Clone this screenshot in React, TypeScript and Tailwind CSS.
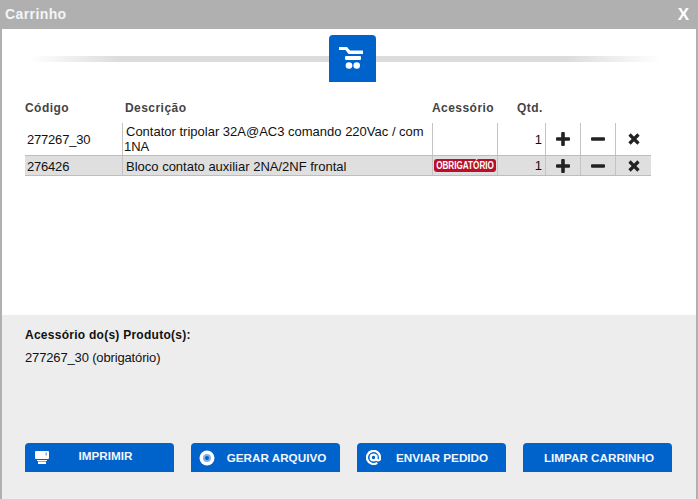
import React from 'react';

interface CartItem {
  code: string;
  description: string;
  required: boolean;
  qty: number;
}

const items: CartItem[] = [
  { code: '277267_30', description: 'Contator tripolar 32A@AC3 comando 220Vac / com 1NA', required: false, qty: 1 },
  { code: '276426', description: 'Bloco contato auxiliar 2NA/2NF frontal', required: true, qty: 1 },
];

const CartIcon = () => (
  <svg className="mr-[3px]" width="24" height="23" viewBox="0 0 24 23" fill="white">
    <path d="M0 0h8l3 3.5h13V7H9.5L6.5 3H0z" />
    <rect x="6" y="9" width="16" height="4" rx="1" />
    <circle cx="10" cy="18.5" r="3.3" />
    <circle cx="17.7" cy="18.5" r="3.3" />
  </svg>
);

const PlusIcon = () => (
  <svg width="16" height="16" viewBox="0 0 16 16" fill="#222">
    <rect x="6.2" y="1" width="3.6" height="14" rx="1" />
    <rect x="1" y="6.2" width="14" height="3.6" rx="1" />
  </svg>
);

const MinusIcon = () => (
  <svg width="16" height="16" viewBox="0 0 16 16" fill="#222">
    <rect x="1" y="6.2" width="14" height="3.6" rx="1" />
  </svg>
);

const CrossIcon = () => (
  <svg width="12" height="12" viewBox="0 0 12 12" stroke="#222" strokeWidth="3.2">
    <path d="M1.5 1.5l9 9M10.5 1.5l-9 9" />
  </svg>
);

const PrintIcon = () => (
  <svg width="15" height="13" viewBox="0 0 15 13" fill="white">
    <rect x="0" y="0" width="14" height="8" rx="1" />
    <rect x="10.5" y="1.5" width="1.5" height="3" fill="#7fb0e6" />
    <rect x="2" y="9" width="10" height="1" />
    <rect x="3" y="10.5" width="8" height="2.5" />
  </svg>
);

const DiscIcon = () => (
  <svg width="16" height="16" viewBox="0 0 16 16">
    <circle cx="8" cy="8" r="7.5" fill="white" />
    <circle cx="8" cy="8" r="4" fill="#7fb0e6" />
    <circle cx="8" cy="8" r="2" fill="#0063cc" />
  </svg>
);

const AtIcon = () => (
  <svg width="15" height="15" viewBox="0 0 16 16" fill="none" stroke="white" strokeWidth="2.4">
    <circle cx="8" cy="8" r="3" />
    <path d="M11 5v4a2 2 0 0 0 4 0V8a7 7 0 1 0-3 5.7" />
  </svg>
);

const buttons = [
  { label: 'IMPRIMIR', icon: <PrintIcon />, iconLeft: 'pl-[9px]', textClass: 'w-[111px] -mt-[3px]' },
  { label: 'GERAR ARQUIVO', icon: <DiscIcon />, iconLeft: 'pl-2', textClass: 'w-[123px]' },
  { label: 'ENVIAR PEDIDO', icon: <AtIcon />, iconLeft: 'pl-2', textClass: 'w-[122px]' },
  { label: 'LIMPAR CARRINHO', icon: null, iconLeft: 'pl-[3px]', textClass: 'w-full' },
];

const App: React.FC = () => {
  return (
    <div className="w-[698px] h-[499px] flex flex-col bg-[#b0b0b0] overflow-hidden font-['Liberation_Sans',Arial,sans-serif]">
      <div className="h-[29px] shrink-0 flex items-center justify-between pl-[5px] pr-[9px]">
        <span className="text-[14px] font-bold tracking-[0.4px] text-[#f5f5f5]">Carrinho</span>
        <span className="text-[17px] font-bold text-white leading-none">X</span>
      </div>

      <div className="flex-1 mx-[2px] flex flex-col">
        <div className="h-[286px] bg-white shrink-0 px-[23px]">
          <div className="relative h-[47px] mt-[6px] flex justify-center pl-[7px]">
            <div className="absolute left-[5px] right-[5px] top-[21px] h-[6px] bg-[linear-gradient(to_right,#fff_0%,#dcdcdc_14%,#dcdcdc_84%,#fff_99%)]" />
            <div className="relative w-[47px] h-[47px] bg-[#0063cc] rounded-t-[4px] flex items-center justify-center">
              <CartIcon />
            </div>
          </div>

          <div className="w-[626px] mt-[15px]">
            <div className="flex h-[22px] text-[12px] font-bold tracking-[0.45px] text-[#444] items-center">
              <div className="w-[100px]">Código</div>
              <div className="w-[307px]">Descrição</div>
              <div className="w-[85px]">Acessório</div>
              <div>Qtd.</div>
            </div>

            <div className="text-[13px] text-[#111] leading-[15px] mt-[4px]">
              {items.map((item, i) => (
                <div
                  key={item.code}
                  className={`flex items-stretch ${i === 1 ? 'h-[21px] bg-[#dfdfdf] border-y border-[#bdbdbd]' : 'h-[32px]'}`}
                >
                  <div className={`w-[97px] pl-[2px] flex items-center tracking-[-0.2px] ${i === 1 ? 'pt-px' : ''}`}>{item.code}</div>
                  <div className={`w-[310px] pl-[1px] border-l border-[#c4c4c4] flex items-center ${i === 1 ? 'pt-px' : ''}`}>
                    <div className="indent-[2px]">{item.description}</div>
                  </div>
                  <div className="w-[65px] border-l border-[#c4c4c4] flex items-center justify-center">
                    {item.required && (
                      <div className="bg-[#b80f2a] rounded-[3px] h-[13px] w-[62px] flex items-center justify-center overflow-hidden">
                        <span className="text-white text-[11px] font-bold leading-none whitespace-nowrap scale-x-[0.74]">
                          OBRIGATÓRIO
                        </span>
                      </div>
                    )}
                  </div>
                  <div className="w-[48px] border-l border-[#c4c4c4] flex items-center justify-end pr-[3px]">{item.qty}</div>
                  <div className="w-[35px] border-l border-[#c4c4c4] flex items-center justify-center"><PlusIcon /></div>
                  <div className="w-[35px] border-l border-[#c4c4c4] flex items-center justify-center"><MinusIcon /></div>
                  <div className="w-[36px] border-l border-[#c4c4c4] flex items-center justify-center"><CrossIcon /></div>
                </div>
              ))}
            </div>
          </div>
        </div>

        <div className="flex-1 bg-[#ededed] px-[23px] flex flex-col">
          <div className="mt-[13px] text-[12px] font-bold tracking-[0.26px] text-[#111] leading-[14px]">Acessório do(s) Produto(s):</div>
          <div className="mt-[9px] text-[13px] tracking-[-0.15px] text-[#111] leading-[14px]">277267_30 (obrigatório)</div>
          <div className="mt-[78px] flex gap-[17px]">
            {buttons.map(b => (
              <div key={b.label} className={`w-[149px] h-[29px] bg-[#0063cc] rounded-t-[4px] flex items-center ${b.iconLeft}`}>
                {b.icon && <div className="w-[16px] shrink-0 flex justify-center">{b.icon}</div>}
                <div className={`${b.textClass} text-center text-[11.7px] font-bold text-[#f2f6fc] whitespace-nowrap`}>{b.label}</div>
              </div>
            ))}
          </div>
        </div>
      </div>
    </div>
  );
};

export default App;
